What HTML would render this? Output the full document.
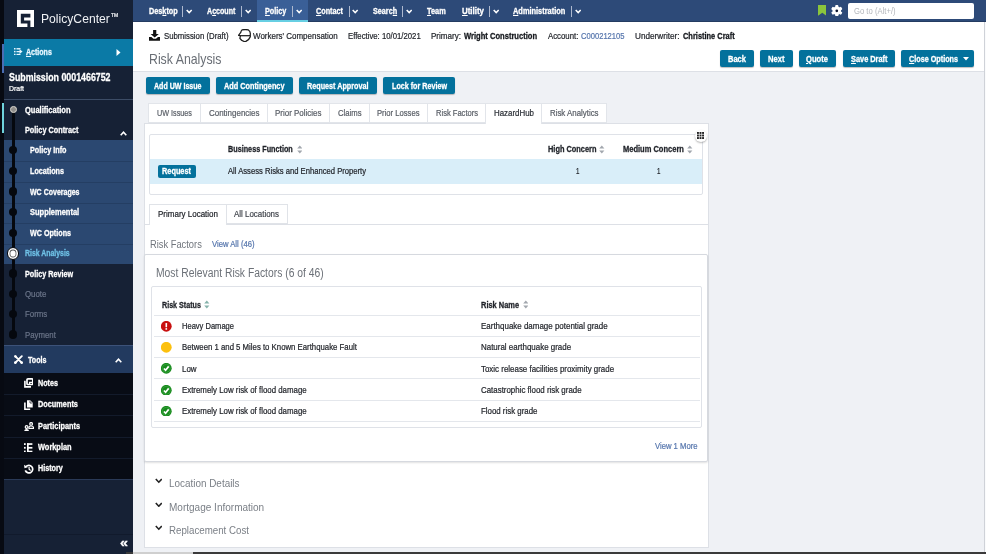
<!DOCTYPE html>
<html>
<head>
<meta charset="utf-8">
<title>PolicyCenter - Risk Analysis</title>
<style>
*{box-sizing:border-box;margin:0;padding:0}
html,body{width:986px;height:554px;overflow:hidden;background:#eff1f5;font-family:"Liberation Sans",sans-serif;}
.t{position:absolute;white-space:nowrap;line-height:1;transform-origin:0 50%;font-family:"Liberation Sans",sans-serif}
.t u{text-decoration:underline;text-underline-offset:1px}
.n{-webkit-text-stroke:0.22px currentColor}
.b{-webkit-text-stroke:0.3px currentColor}
#w{position:absolute;left:0;top:0;width:986px;height:554px;will-change:transform}
</style>
</head>
<body>
<div id="w">
<div style="position:absolute;left:0px;top:0px;width:133px;height:554px;background:#162135;"></div>
<div style="position:absolute;left:0px;top:0px;width:4px;height:554px;background:#070a12;"></div>
<div style="position:absolute;left:1.8px;top:44px;width:2.2px;height:28.5px;background:#4a6db3;"></div>
<div style="position:absolute;left:1.8px;top:103px;width:2.3px;height:30px;background:#6fd3dc;"></div>
<svg style="position:absolute;left:17px;top:10px" width="17" height="17" viewBox="0 0 17 17"><path d="M0 0H17V17H13.4V10.6H7.1V7.5H13.4V3.8H3.8V13.5H10.4V17H0Z" fill="#fff"/></svg>
<div style="position:absolute;left:4px;top:39px;width:129px;height:27px;background:#0b7aa6;"></div>
<svg style="position:absolute;left:14.4px;top:47.5px" width="8.6" height="7.4" viewBox="0 0 9 8" preserveAspectRatio="none"><g fill="#e6f6ff"><rect x="0" y="0" width="1.6" height="1.6"/><rect x="0" y="3.1" width="1.6" height="1.6"/><rect x="0" y="6.2" width="1.6" height="1.6"/><rect x="2.6" y="0.1" width="4.2" height="1.5"/><rect x="2.6" y="6.3" width="4.2" height="1.5"/><path d="M2.6 3.15H5.8V1.4L9 3.9L5.8 6.4V4.65H2.6Z"/></g></svg>
<svg style="position:absolute;left:116px;top:48.5px" width="5" height="7" viewBox="0 0 5 7"><path d="M0.5 0L4.5 3.5L0.5 7Z" fill="#fff"/></svg>
<div style="position:absolute;left:4px;top:99px;width:129px;height:1px;background:#3c4c66;"></div>
<div style="position:absolute;left:4px;top:140px;width:129px;height:124px;background:#2b4871;"></div>
<div style="position:absolute;left:4px;top:161px;width:129px;height:1px;background:#243e63;"></div>
<div style="position:absolute;left:4px;top:182px;width:129px;height:1px;background:#243e63;"></div>
<div style="position:absolute;left:4px;top:202.5px;width:129px;height:1px;background:#243e63;"></div>
<div style="position:absolute;left:4px;top:223px;width:129px;height:1px;background:#243e63;"></div>
<div style="position:absolute;left:4px;top:243.5px;width:129px;height:1px;background:#243e63;"></div>
<div style="position:absolute;left:12px;top:112px;width:2.6px;height:223px;background:#05080e;"></div>
<div style="position:absolute;left:9.2px;top:145.9px;width:8.2px;height:8.2px;border-radius:50%;background:#05080e"></div>
<div style="position:absolute;left:9.2px;top:166.9px;width:8.2px;height:8.2px;border-radius:50%;background:#05080e"></div>
<div style="position:absolute;left:9.2px;top:187.4px;width:8.2px;height:8.2px;border-radius:50%;background:#05080e"></div>
<div style="position:absolute;left:9.2px;top:207.9px;width:8.2px;height:8.2px;border-radius:50%;background:#05080e"></div>
<div style="position:absolute;left:9.2px;top:228.9px;width:8.2px;height:8.2px;border-radius:50%;background:#05080e"></div>
<div style="position:absolute;left:9.2px;top:269.4px;width:8.2px;height:8.2px;border-radius:50%;background:#05080e"></div>
<div style="position:absolute;left:9.2px;top:289.9px;width:8.2px;height:8.2px;border-radius:50%;background:#05080e"></div>
<div style="position:absolute;left:9.2px;top:309.9px;width:8.2px;height:8.2px;border-radius:50%;background:#05080e"></div>
<div style="position:absolute;left:9.2px;top:330.4px;width:8.2px;height:8.2px;border-radius:50%;background:#05080e"></div>
<div style="position:absolute;left:10px;top:106.4px;width:6.8px;height:6.8px;border-radius:50%;background:#8f8d8a;border:1.5px solid #dcd8d0"></div>
<div style="position:absolute;left:6.6px;top:246.9px;width:12.8px;height:12.8px;border-radius:50%;background:#fff;border:1.6px solid #05080e;box-shadow:inset 0 0 0 1.6px #fff, inset 0 0 0 2.4px #555"></div>
<svg style="position:absolute;left:120px;top:131px" width="7" height="5" viewBox="0 0 7 5"><path d="M0.7 4.2L3.5 1.2L6.3 4.2" stroke="#fff" stroke-width="1.6" fill="none"/></svg>
<div style="position:absolute;left:4px;top:345px;width:129px;height:1px;background:#3c5279;"></div>
<div style="position:absolute;left:4px;top:346px;width:129px;height:27px;background:#223a5f;"></div>
<svg style="position:absolute;left:13.8px;top:355.4px" width="9" height="9" viewBox="0 0 9 9"><path d="M1.2 1.2L7.8 7.8M7.8 1.2L1.2 7.8" stroke="#fff" stroke-width="1.9" stroke-linecap="round"/><circle cx="1.4" cy="7.6" r="1.4" fill="#fff"/><circle cx="7.6" cy="7.6" r="1.4" fill="#fff"/><circle cx="1.5" cy="1.5" r="1.2" fill="#fff"/></svg>
<svg style="position:absolute;left:115.3px;top:357.5px" width="7" height="5" viewBox="0 0 7 5"><path d="M0.7 4.2L3.5 1.2L6.3 4.2" stroke="#fff" stroke-width="1.6" fill="none"/></svg>
<div style="position:absolute;left:4px;top:373px;width:129px;height:106px;background:#080c15;"></div>
<div style="position:absolute;left:4px;top:393.5px;width:129px;height:1px;background:#131b2b;"></div>
<div style="position:absolute;left:4px;top:415px;width:129px;height:1px;background:#131b2b;"></div>
<div style="position:absolute;left:4px;top:436.5px;width:129px;height:1px;background:#131b2b;"></div>
<div style="position:absolute;left:4px;top:457.5px;width:129px;height:1px;background:#131b2b;"></div>
<div style="position:absolute;left:4px;top:479px;width:129px;height:1px;background:#2a3a57;"></div>
<svg style="position:absolute;left:23.8px;top:378px" width="9.6" height="9.8" viewBox="0 0 9.6 9.8"><rect x="3" y="0.9" width="5.8" height="5.6" rx="1" fill="none" stroke="#fff" stroke-width="1.7"/><path d="M0.9 2.8V8.9H7" fill="none" stroke="#fff" stroke-width="1.6"/><path d="M5.6 6.6V4.4H8.8" fill="none" stroke="#fff" stroke-width="1.2"/></svg>
<svg style="position:absolute;left:24.2px;top:400px" width="9" height="10" viewBox="0 0 9 10"><path d="M3 0.3H6.2L8.7 2.8V7.4H3Z" fill="#fff"/><path d="M6 0.8V3H8.2" fill="none" stroke="#080c15" stroke-width="0.7"/><path d="M0.9 2.4V9.2H6.2" fill="none" stroke="#fff" stroke-width="1.6"/></svg>
<svg style="position:absolute;left:23.8px;top:421.6px" width="9.8" height="9.8" viewBox="0 0 9.8 9.8"><circle cx="2.6" cy="5" r="1.35" fill="none" stroke="#fff" stroke-width="1.2"/><path d="M0.3 9.6V8.8Q0.3 7.1 2.6 7.1Q4.9 7.1 4.9 8.8V9.6Z" fill="#fff"/><circle cx="7.1" cy="1.9" r="1.35" fill="none" stroke="#fff" stroke-width="1.2"/><path d="M4.9 6.4V5.6Q4.9 4 7.1 4Q9.5 4 9.5 5.6V6.4Z" fill="none" stroke="#fff" stroke-width="1.1"/></svg>
<svg style="position:absolute;left:24.3px;top:442.8px" width="8.6" height="9.6" viewBox="0 0 8.6 9.6"><g fill="#fff"><rect x="0" y="0.2" width="1.7" height="1.8"/><rect x="0" y="3.9" width="1.7" height="1.8"/><rect x="0" y="7.6" width="1.7" height="1.8"/><rect x="3" y="0.2" width="1.7" height="9.2"/><rect x="3" y="0.2" width="5.4" height="1.7"/><rect x="3" y="3.95" width="5.4" height="1.7"/><rect x="3" y="7.7" width="5.4" height="1.7"/></g></svg>
<svg style="position:absolute;left:24.2px;top:463.5px" width="9.8" height="10" viewBox="0 0 9.8 10"><path d="M2 2.6A3.8 3.8 0 1 1 1.3 6.4" fill="none" stroke="#fff" stroke-width="1.7"/><path d="M0 0.8L0.5 4.2L3.8 3.3Z" fill="#fff"/><path d="M5.1 3V5.3L6.6 6.4" fill="none" stroke="#fff" stroke-width="1.2"/></svg>
<div style="position:absolute;left:4px;top:533.5px;width:129px;height:1px;background:#111a2c;"></div>
<div style="position:absolute;left:133px;top:0px;width:853px;height:22px;background:#2d4a78;"></div>
<div style="position:absolute;left:133px;top:21px;width:853px;height:1px;background:#243b61;"></div>
<div style="position:absolute;left:256.5px;top:0px;width:51px;height:22px;background:#3a5f97;"></div>
<div style="position:absolute;left:256.5px;top:20px;width:51px;height:2px;background:#67cfe3;"></div>
<div style="position:absolute;left:182.4px;top:6px;width:1px;height:11px;background:#aeb9cf;"></div>
<svg style="position:absolute;left:186.3px;top:9px" width="6.4" height="5" viewBox="0 0 6.4 5"><path d="M0.7 0.9L3.2 3.6L5.7 0.9" stroke="#fff" stroke-width="1.5" fill="none"/></svg>
<div style="position:absolute;left:241.3px;top:6px;width:1px;height:11px;background:#aeb9cf;"></div>
<svg style="position:absolute;left:244.8px;top:9px" width="6.4" height="5" viewBox="0 0 6.4 5"><path d="M0.7 0.9L3.2 3.6L5.7 0.9" stroke="#fff" stroke-width="1.5" fill="none"/></svg>
<div style="position:absolute;left:292.0px;top:6px;width:1px;height:11px;background:#aeb9cf;"></div>
<svg style="position:absolute;left:295.6px;top:9px" width="6.4" height="5" viewBox="0 0 6.4 5"><path d="M0.7 0.9L3.2 3.6L5.7 0.9" stroke="#fff" stroke-width="1.5" fill="none"/></svg>
<div style="position:absolute;left:348.5px;top:6px;width:1px;height:11px;background:#aeb9cf;"></div>
<svg style="position:absolute;left:352.3px;top:9px" width="6.4" height="5" viewBox="0 0 6.4 5"><path d="M0.7 0.9L3.2 3.6L5.7 0.9" stroke="#fff" stroke-width="1.5" fill="none"/></svg>
<div style="position:absolute;left:402.1px;top:6px;width:1px;height:11px;background:#aeb9cf;"></div>
<svg style="position:absolute;left:406.0px;top:9px" width="6.4" height="5" viewBox="0 0 6.4 5"><path d="M0.7 0.9L3.2 3.6L5.7 0.9" stroke="#fff" stroke-width="1.5" fill="none"/></svg>
<div style="position:absolute;left:489.2px;top:6px;width:1px;height:11px;background:#aeb9cf;"></div>
<svg style="position:absolute;left:493.1px;top:9px" width="6.4" height="5" viewBox="0 0 6.4 5"><path d="M0.7 0.9L3.2 3.6L5.7 0.9" stroke="#fff" stroke-width="1.5" fill="none"/></svg>
<div style="position:absolute;left:570.8px;top:6px;width:1px;height:11px;background:#aeb9cf;"></div>
<svg style="position:absolute;left:574.6999999999999px;top:9px" width="6.4" height="5" viewBox="0 0 6.4 5"><path d="M0.7 0.9L3.2 3.6L5.7 0.9" stroke="#fff" stroke-width="1.5" fill="none"/></svg>
<svg style="position:absolute;left:817.6px;top:5.2px" width="8.6" height="10.8" viewBox="0 0 8.6 10.8"><path d="M0 0H8.6V10.8L4.3 7.8L0 10.8Z" fill="#8bc53c"/></svg>
<svg style="position:absolute;left:831.4px;top:4.9px" width="11.6" height="11.6" viewBox="-5.8 -5.8 11.6 11.6"><g fill="#fff"><circle r="4.3"/><g id="t"><rect x="-1.55" y="-5.7" width="3.1" height="11.4" rx="0.8"/></g><use href="#t" transform="rotate(60)"/><use href="#t" transform="rotate(120)"/></g><circle r="1.35" fill="#0d1530"/></svg>
<div style="position:absolute;left:848px;top:3px;width:126px;height:16.3px;background:#fff;border-radius:2px"></div>
<div style="position:absolute;left:133px;top:22px;width:853px;height:24px;background:#fff;"></div>
<div style="position:absolute;left:133px;top:45.5px;width:853px;height:1px;background:#dde0e6;"></div>
<svg style="position:absolute;left:148.5px;top:30.2px" width="11.4" height="10.7" viewBox="0 0 11.4 10.7"><path d="M4.1 0H7.3V3.9H9.8L5.7 7.6L1.6 3.9H4.1Z" fill="#111"/><path d="M0 6.9H2.4L4.4 8.7H7L9 6.9H11.4V10.7H0Z" fill="#111"/></svg>
<svg style="position:absolute;left:238.2px;top:28.7px" width="13" height="13.4" viewBox="0 0 13 13.4"><g fill="none" stroke="#1c1c1c" stroke-width="1.25" stroke-linejoin="round"><path d="M4 0.9Q7.2 0.2 10.4 0.9Q12.3 2.2 12.3 4.2V7.8Q11.2 11.2 7.1 12.8Q3.4 11.8 1.9 9.4L2.4 6.6L0.5 6.3L2.8 3.4Q3 1.6 4 0.9Z"/><path d="M2.4 6.7H12.2"/></g></svg>
<div style="position:absolute;left:133px;top:46px;width:853px;height:25px;background:#fff;"></div>
<div style="position:absolute;left:133px;top:70.5px;width:853px;height:1px;background:#dde0e6;"></div>
<div style="position:absolute;left:720.4px;top:50.4px;width:33.80000000000007px;height:16.199999999999996px;background:#03719c;border-radius:2px;box-shadow:0 1px 1px rgba(0,0,0,.25)"></div>
<div style="position:absolute;left:760.4px;top:50.4px;width:32.200000000000045px;height:16.199999999999996px;background:#03719c;border-radius:2px;box-shadow:0 1px 1px rgba(0,0,0,.25)"></div>
<div style="position:absolute;left:798.5px;top:50.4px;width:37.5px;height:16.199999999999996px;background:#03719c;border-radius:2px;box-shadow:0 1px 1px rgba(0,0,0,.25)"></div>
<div style="position:absolute;left:842.7px;top:50.4px;width:52.09999999999991px;height:16.199999999999996px;background:#03719c;border-radius:2px;box-shadow:0 1px 1px rgba(0,0,0,.25)"></div>
<div style="position:absolute;left:901px;top:50.4px;width:73px;height:16.199999999999996px;background:#03719c;border-radius:2px;box-shadow:0 1px 1px rgba(0,0,0,.25)"></div>
<svg style="position:absolute;left:963px;top:57px" width="6" height="4" viewBox="0 0 6 4"><path d="M0 0H6L3 3.6Z" fill="#fff"/></svg>
<div style="position:absolute;left:146px;top:77.4px;width:64.30000000000001px;height:16.799999999999997px;background:#03719c;border-radius:2px;box-shadow:0 1px 1px rgba(0,0,0,.25)"></div>
<div style="position:absolute;left:216.3px;top:77.4px;width:76.69999999999999px;height:16.799999999999997px;background:#03719c;border-radius:2px;box-shadow:0 1px 1px rgba(0,0,0,.25)"></div>
<div style="position:absolute;left:299px;top:77.4px;width:78px;height:16.799999999999997px;background:#03719c;border-radius:2px;box-shadow:0 1px 1px rgba(0,0,0,.25)"></div>
<div style="position:absolute;left:383.3px;top:77.4px;width:72.0px;height:16.799999999999997px;background:#03719c;border-radius:2px;box-shadow:0 1px 1px rgba(0,0,0,.25)"></div>
<div style="position:absolute;left:143.7px;top:123px;width:565px;height:431px;background:#fff;border:1px solid #dde0e6;border-bottom:none"></div>
<div style="position:absolute;left:147.8px;top:102.7px;width:53.599999999999994px;height:20.3px;background:#fff;border:1px solid #e2e5ea;"></div>
<div style="position:absolute;left:200.4px;top:102.7px;width:67.19999999999999px;height:20.3px;background:#fff;border:1px solid #e2e5ea;"></div>
<div style="position:absolute;left:266.59999999999997px;top:102.7px;width:63.60000000000002px;height:20.3px;background:#fff;border:1px solid #e2e5ea;"></div>
<div style="position:absolute;left:329.2px;top:102.7px;width:40.39999999999998px;height:20.3px;background:#fff;border:1px solid #e2e5ea;"></div>
<div style="position:absolute;left:368.59999999999997px;top:102.7px;width:59.30000000000001px;height:20.3px;background:#fff;border:1px solid #e2e5ea;"></div>
<div style="position:absolute;left:426.9px;top:102.7px;width:59.5px;height:20.3px;background:#fff;border:1px solid #e2e5ea;"></div>
<div style="position:absolute;left:485.4px;top:102.7px;width:56.5px;height:21px;background:#fff;border:1px solid #e2e5ea;border-bottom:none;"></div>
<div style="position:absolute;left:540.9px;top:102.7px;width:65.89999999999998px;height:20.3px;background:#fff;border:1px solid #e2e5ea;"></div>
<div style="position:absolute;left:149px;top:134px;width:554px;height:60.6px;background:#fff;border:1px solid #dfe2e8;border-radius:2px"></div>
<div style="position:absolute;left:150px;top:159.3px;width:552px;height:24.3px;background:#d9eef9;"></div>
<svg style="position:absolute;left:296.5px;top:144.7px" width="5.6" height="9" viewBox="0 0 5.6 9"><path d="M0.2 3.4L2.8 0.4L5.4 3.4Z M0.2 5.6L2.8 8.6L5.4 5.6Z" fill="#a2a7ae"/></svg>
<svg style="position:absolute;left:599.4000000000001px;top:144.7px" width="5.6" height="9" viewBox="0 0 5.6 9"><path d="M0.2 3.4L2.8 0.4L5.4 3.4Z M0.2 5.6L2.8 8.6L5.4 5.6Z" fill="#a2a7ae"/></svg>
<svg style="position:absolute;left:687.0px;top:144.7px" width="5.6" height="9" viewBox="0 0 5.6 9"><path d="M0.2 3.4L2.8 0.4L5.4 3.4Z M0.2 5.6L2.8 8.6L5.4 5.6Z" fill="#a2a7ae"/></svg>
<div style="position:absolute;left:157.6px;top:164.5px;width:38.2px;height:13.8px;background:#03719c;border-radius:2px"></div>
<div style="position:absolute;left:694.5px;top:129.5px;width:12px;height:12px;border-radius:50%;background:#fff;box-shadow:0 1px 2px rgba(0,0,0,.3)"></div>
<svg style="position:absolute;left:697px;top:132px" width="7" height="7" viewBox="0 0 7 7"><g fill="#222"><rect x="0" y="0" width="1.9" height="1.9"/><rect x="2.55" y="0" width="1.9" height="1.9"/><rect x="5.1" y="0" width="1.9" height="1.9"/><rect x="0" y="2.55" width="1.9" height="1.9"/><rect x="2.55" y="2.55" width="1.9" height="1.9"/><rect x="5.1" y="2.55" width="1.9" height="1.9"/><rect x="0" y="5.1" width="1.9" height="1.9"/><rect x="2.55" y="5.1" width="1.9" height="1.9"/><rect x="5.1" y="5.1" width="1.9" height="1.9"/></g></svg>
<div style="position:absolute;left:144.7px;top:224px;width:563px;height:1px;background:#dde0e6;"></div>
<div style="position:absolute;left:149.1px;top:203.5px;width:78px;height:21.5px;background:#fff;border:1px solid #e0e3e8;border-bottom:none"></div>
<div style="position:absolute;left:226.1px;top:203.5px;width:62px;height:20.7px;background:#fff;border:1px solid #e0e3e8"></div>
<div style="position:absolute;left:144.2px;top:254.3px;width:564.3px;height:208px;background:#fff;border:1px solid #d6d9df;border-radius:2px;box-shadow:0 1px 2px rgba(0,0,0,.12)"></div>
<div style="position:absolute;left:150.6px;top:286.4px;width:551.6px;height:141.6px;background:#fff;border:1px solid #dfe2e8;border-radius:2px"></div>
<svg style="position:absolute;left:204.2px;top:300.3px" width="5.6" height="9" viewBox="0 0 5.6 9"><path d="M0.2 3.4L2.8 0.4L5.4 3.4Z M0.2 5.6L2.8 8.6L5.4 5.6Z" fill="#86b3ab"/></svg>
<svg style="position:absolute;left:522.7px;top:300.3px" width="5.6" height="9" viewBox="0 0 5.6 9"><path d="M0.2 3.4L2.8 0.4L5.4 3.4Z M0.2 5.6L2.8 8.6L5.4 5.6Z" fill="#a2a7ae"/></svg>
<div style="position:absolute;left:153.7px;top:314.5px;width:546px;height:1px;background:#e4e7ec;"></div>
<div style="position:absolute;left:153.7px;top:335.8px;width:546px;height:1px;background:#e4e7ec;"></div>
<div style="position:absolute;left:153.7px;top:357.1px;width:546px;height:1px;background:#e4e7ec;"></div>
<div style="position:absolute;left:153.7px;top:378.4px;width:546px;height:1px;background:#e4e7ec;"></div>
<div style="position:absolute;left:153.7px;top:399.7px;width:546px;height:1px;background:#e4e7ec;"></div>
<div style="position:absolute;left:153.7px;top:421.0px;width:546px;height:1px;background:#e4e7ec;"></div>
<svg style="position:absolute;left:161.2px;top:321.0px" width="10.6" height="10.6" viewBox="0 0 10.6 10.6"><circle cx="5.3" cy="5.3" r="5.4" fill="#c8100f"/><rect x="4.5" y="2" width="1.6" height="4.3" rx="0.6" fill="#fff"/><circle cx="5.3" cy="7.9" r="0.95" fill="#fff"/></svg>
<svg style="position:absolute;left:161.2px;top:342.09999999999997px" width="10.6" height="10.6" viewBox="0 0 10.6 10.6"><circle cx="5.3" cy="5.3" r="5.4" fill="#fcc00e"/></svg>
<svg style="position:absolute;left:161.2px;top:363.3px" width="10.6" height="10.6" viewBox="0 0 10.6 10.6"><circle cx="5.3" cy="5.3" r="5.4" fill="#168a1b"/><circle cx="5.3" cy="5.3" r="4" fill="none" stroke="#4fb055" stroke-width="0.5"/><path d="M2.9 5.5L4.6 7.2L7.7 3.4" stroke="#fff" stroke-width="1.7" fill="none"/></svg>
<svg style="position:absolute;left:161.2px;top:384.5px" width="10.6" height="10.6" viewBox="0 0 10.6 10.6"><circle cx="5.3" cy="5.3" r="5.4" fill="#168a1b"/><circle cx="5.3" cy="5.3" r="4" fill="none" stroke="#4fb055" stroke-width="0.5"/><path d="M2.9 5.5L4.6 7.2L7.7 3.4" stroke="#fff" stroke-width="1.7" fill="none"/></svg>
<svg style="position:absolute;left:161.2px;top:405.8px" width="10.6" height="10.6" viewBox="0 0 10.6 10.6"><circle cx="5.3" cy="5.3" r="5.4" fill="#168a1b"/><circle cx="5.3" cy="5.3" r="4" fill="none" stroke="#4fb055" stroke-width="0.5"/><path d="M2.9 5.5L4.6 7.2L7.7 3.4" stroke="#fff" stroke-width="1.7" fill="none"/></svg>
<svg style="position:absolute;left:154.6px;top:478.4px" width="7.6" height="5.6" viewBox="0 0 7.6 5.6"><path d="M0.8 1L3.8 4.2L6.8 1" stroke="#222" stroke-width="1.6" fill="none"/></svg>
<svg style="position:absolute;left:154.6px;top:501.9px" width="7.6" height="5.6" viewBox="0 0 7.6 5.6"><path d="M0.8 1L3.8 4.2L6.8 1" stroke="#222" stroke-width="1.6" fill="none"/></svg>
<svg style="position:absolute;left:154.6px;top:525.4px" width="7.6" height="5.6" viewBox="0 0 7.6 5.6"><path d="M0.8 1L3.8 4.2L6.8 1" stroke="#222" stroke-width="1.6" fill="none"/></svg>
<div style="position:absolute;left:143.7px;top:546.7px;width:565px;height:1px;background:#dde0e6;"></div>
<div style="position:absolute;left:143.7px;top:547.7px;width:565px;height:7px;background:#eff1f5;"></div>
<div style="position:absolute;left:125.5px;top:552px;width:860.5px;height:2px;background:#3a3a3a;"></div>
<div style="position:absolute;left:133px;top:552px;width:60px;height:2px;background:#cfcfcf;"></div>
<div style="position:absolute;left:984px;top:22px;width:1px;height:530px;background:#cfd2d8;"></div>
<div style="position:absolute;left:985px;top:22px;width:1px;height:530px;background:#fafbfc;"></div>
<span class="t" style="left:40.9px;top:12.62px;font-size:12.32px;font-weight:normal;color:#f0f2f5;transform:scaleX(0.9855);">PolicyCenter</span>
<span class="t n" style="left:110.5px;top:14.26px;font-size:4.62px;font-weight:normal;color:#e8eaee;transform:scaleX(1.0817);">TM</span>
<span class="t b" style="left:26.0px;top:47.84px;font-size:8.47px;font-weight:bold;color:#e9f7ff;transform:scaleX(0.8302);"><u>A</u>ctions</span>
<span class="t b" style="left:9.2px;top:71.93px;font-size:11.22px;font-weight:bold;color:#fff;transform:scaleX(0.7863);">Submission 0001466752</span>
<span class="t n" style="left:9.2px;top:85.17px;font-size:7.7px;font-weight:normal;color:#fff;transform:scaleX(0.8997);">Draft</span>
<span class="t b" style="left:25.2px;top:105.56px;font-size:8.8px;font-weight:bold;color:#fff;transform:scaleX(0.8540);">Qualification</span>
<span class="t b" style="left:25.2px;top:125.56px;font-size:8.8px;font-weight:bold;color:#fff;transform:scaleX(0.8291);">Policy Contract</span>
<span class="t b" style="left:29.8px;top:146.06px;font-size:8.8px;font-weight:bold;color:#fff;transform:scaleX(0.8205);">Policy Info</span>
<span class="t b" style="left:29.8px;top:167.06px;font-size:8.8px;font-weight:bold;color:#fff;transform:scaleX(0.8184);">Locations</span>
<span class="t b" style="left:29.5px;top:187.56px;font-size:8.8px;font-weight:bold;color:#fff;transform:scaleX(0.7972);">WC Coverages</span>
<span class="t b" style="left:29.8px;top:208.26px;font-size:8.8px;font-weight:bold;color:#fff;transform:scaleX(0.8529);">Supplemental</span>
<span class="t b" style="left:29.5px;top:229.36px;font-size:8.8px;font-weight:bold;color:#fff;transform:scaleX(0.8144);">WC Options</span>
<span class="t b" style="left:25.2px;top:249.36px;font-size:8.8px;font-weight:bold;color:#6fc1e6;transform:scaleX(0.7857);">Risk Analysis</span>
<span class="t b" style="left:25.2px;top:269.76px;font-size:8.8px;font-weight:bold;color:#fff;transform:scaleX(0.8179);">Policy Review</span>
<span class="t n" style="left:25.2px;top:290.06px;font-size:8.8px;font-weight:normal;color:#6a7488;transform:scaleX(0.8928);">Quote</span>
<span class="t n" style="left:25.2px;top:310.06px;font-size:8.8px;font-weight:normal;color:#6a7488;transform:scaleX(0.8908);">Forms</span>
<span class="t n" style="left:25.2px;top:330.66px;font-size:8.8px;font-weight:normal;color:#6a7488;transform:scaleX(0.8871);">Payment</span>
<span class="t b" style="left:27.8px;top:355.56px;font-size:8.8px;font-weight:bold;color:#fff;transform:scaleX(0.8066);">Tools</span>
<span class="t b" style="left:37.9px;top:379.06px;font-size:8.8px;font-weight:bold;color:#fff;transform:scaleX(0.8179);">Notes</span>
<span class="t b" style="left:37.9px;top:400.46px;font-size:8.8px;font-weight:bold;color:#fff;transform:scaleX(0.8329);">Documents</span>
<span class="t b" style="left:37.9px;top:422.06px;font-size:8.8px;font-weight:bold;color:#fff;transform:scaleX(0.8340);">Participants</span>
<span class="t b" style="left:37.9px;top:443.06px;font-size:8.8px;font-weight:bold;color:#fff;transform:scaleX(0.8416);">Workplan</span>
<span class="t b" style="left:37.9px;top:464.46px;font-size:8.8px;font-weight:bold;color:#fff;transform:scaleX(0.8181);">History</span>
<span class="t b" style="left:119.6px;top:536.54px;font-size:12.1px;font-weight:bold;color:#fff;transform:scaleX(1.1879);">«</span>
<span class="t b" style="left:148.8px;top:7.26px;font-size:8.8px;font-weight:bold;color:#fff;transform:scaleX(0.8263);">Des<u>k</u>top</span>
<span class="t b" style="left:206.8px;top:7.26px;font-size:8.8px;font-weight:bold;color:#fff;transform:scaleX(0.8064);">A<u>c</u>count</span>
<span class="t b" style="left:265.0px;top:7.26px;font-size:8.8px;font-weight:bold;color:#fff;transform:scaleX(0.8256);"><u>P</u>olicy</span>
<span class="t b" style="left:316.0px;top:7.26px;font-size:8.8px;font-weight:bold;color:#fff;transform:scaleX(0.8240);"><u>C</u>ontact</span>
<span class="t b" style="left:372.9px;top:7.26px;font-size:8.8px;font-weight:bold;color:#fff;transform:scaleX(0.8213);">Searc<u>h</u></span>
<span class="t b" style="left:427.0px;top:7.26px;font-size:8.8px;font-weight:bold;color:#fff;transform:scaleX(0.8369);"><u>T</u>eam</span>
<span class="t b" style="left:462.2px;top:7.26px;font-size:8.8px;font-weight:bold;color:#fff;transform:scaleX(0.8956);"><u>U</u>tility</span>
<span class="t b" style="left:513.4px;top:7.26px;font-size:8.8px;font-weight:bold;color:#fff;transform:scaleX(0.8425);"><u>A</u>dministration</span>
<span class="t" style="left:853.8px;top:7.36px;font-size:8.8px;font-weight:normal;color:#b3b6bb;transform:scaleX(0.8726);">Go to (Alt+/)</span>
<span class="t n" style="left:163.7px;top:31.76px;font-size:8.8px;font-weight:normal;color:#1f2228;transform:scaleX(0.8855);">Submission (Draft)</span>
<span class="t n" style="left:253.0px;top:31.76px;font-size:8.8px;font-weight:normal;color:#1f2228;transform:scaleX(0.9065);">Workers' Compensation</span>
<span class="t n" style="left:347.8px;top:31.76px;font-size:8.8px;font-weight:normal;color:#1f2228;transform:scaleX(0.8812);">Effective: 10/01/2021</span>
<span class="t n" style="left:431.4px;top:31.76px;font-size:8.8px;font-weight:normal;color:#1f2228;transform:scaleX(0.9160);">Primary:</span>
<span class="t b" style="left:464.1px;top:31.76px;font-size:8.8px;font-weight:bold;color:#15181d;transform:scaleX(0.8613);">Wright Construction</span>
<span class="t n" style="left:547.6px;top:31.76px;font-size:8.8px;font-weight:normal;color:#1f2228;transform:scaleX(0.8880);">Account:</span>
<span class="t n" style="left:581.0px;top:31.76px;font-size:8.8px;font-weight:normal;color:#5676ad;transform:scaleX(0.8633);">C000212105</span>
<span class="t n" style="left:634.8px;top:31.76px;font-size:8.8px;font-weight:normal;color:#1f2228;transform:scaleX(0.9289);">Underwriter:</span>
<span class="t b" style="left:682.8px;top:31.76px;font-size:8.8px;font-weight:bold;color:#15181d;transform:scaleX(0.8460);">Christine Craft</span>
<span class="t" style="left:149.0px;top:52.33px;font-size:14.3px;font-weight:normal;color:#696e75;transform:scaleX(0.8609);">Risk Analysis</span>
<span class="t b" style="left:728.3px;top:54.66px;font-size:8.8px;font-weight:bold;color:#fff;transform:scaleX(0.8559);">Back</span>
<span class="t b" style="left:768.2px;top:54.66px;font-size:8.8px;font-weight:bold;color:#fff;transform:scaleX(0.8649);">Next</span>
<span class="t b" style="left:806.2px;top:54.66px;font-size:8.8px;font-weight:bold;color:#fff;transform:scaleX(0.8654);"><u>Q</u>uote</span>
<span class="t b" style="left:850.5px;top:54.66px;font-size:8.8px;font-weight:bold;color:#fff;transform:scaleX(0.8385);"><u>S</u>ave Draft</span>
<span class="t b" style="left:908.5px;top:54.66px;font-size:8.8px;font-weight:bold;color:#fff;transform:scaleX(0.8216);"><u>C</u>lose Options</span>
<span class="t b" style="left:154.4px;top:81.86px;font-size:8.8px;font-weight:bold;color:#fff;transform:scaleX(0.8032);">Add UW Issue</span>
<span class="t b" style="left:224.4px;top:81.86px;font-size:8.8px;font-weight:bold;color:#fff;transform:scaleX(0.8307);">Add Contingency</span>
<span class="t b" style="left:307.2px;top:81.86px;font-size:8.8px;font-weight:bold;color:#fff;transform:scaleX(0.8205);">Request Approval</span>
<span class="t b" style="left:391.8px;top:81.86px;font-size:8.8px;font-weight:bold;color:#fff;transform:scaleX(0.8152);">Lock for Review</span>
<span class="t n" style="left:157.2px;top:108.96px;font-size:8.8px;font-weight:normal;color:#5a5f67;transform:scaleX(0.8229);">UW Issues</span>
<span class="t n" style="left:208.8px;top:108.96px;font-size:8.8px;font-weight:normal;color:#5a5f67;transform:scaleX(0.9058);">Contingencies</span>
<span class="t n" style="left:275.2px;top:108.96px;font-size:8.8px;font-weight:normal;color:#5a5f67;transform:scaleX(0.9057);">Prior Policies</span>
<span class="t n" style="left:337.8px;top:108.96px;font-size:8.8px;font-weight:normal;color:#5a5f67;transform:scaleX(0.8739);">Claims</span>
<span class="t n" style="left:377.1px;top:108.96px;font-size:8.8px;font-weight:normal;color:#5a5f67;transform:scaleX(0.8693);">Prior Losses</span>
<span class="t n" style="left:435.8px;top:108.96px;font-size:8.8px;font-weight:normal;color:#5a5f67;transform:scaleX(0.8591);">Risk Factors</span>
<span class="t n" style="left:493.8px;top:108.96px;font-size:8.8px;font-weight:normal;color:#2b2f36;transform:scaleX(0.8989);">HazardHub</span>
<span class="t n" style="left:549.7px;top:108.96px;font-size:8.8px;font-weight:normal;color:#5a5f67;transform:scaleX(0.8938);">Risk Analytics</span>
<span class="t b" style="left:228.2px;top:144.76px;font-size:8.8px;font-weight:bold;color:#1f2228;transform:scaleX(0.8233);">Business Function</span>
<span class="t b" style="left:547.5px;top:144.76px;font-size:8.8px;font-weight:bold;color:#1f2228;transform:scaleX(0.8410);">High Concern</span>
<span class="t b" style="left:622.7px;top:144.76px;font-size:8.8px;font-weight:bold;color:#1f2228;transform:scaleX(0.8534);">Medium Concern</span>
<span class="t b" style="left:162.3px;top:167.36px;font-size:8.8px;font-weight:bold;color:#fff;transform:scaleX(0.8353);">Request</span>
<span class="t n" style="left:228.2px;top:167.26px;font-size:8.8px;font-weight:normal;color:#1f2228;transform:scaleX(0.8684);">All Assess Risks and Enhanced Property</span>
<span class="t n" style="left:575.8px;top:167.26px;font-size:8.8px;font-weight:normal;color:#1f2228;transform:scaleX(0.7000);">1</span>
<span class="t n" style="left:657.4px;top:167.26px;font-size:8.8px;font-weight:normal;color:#1f2228;transform:scaleX(0.7000);">1</span>
<span class="t n" style="left:157.6px;top:209.96px;font-size:8.8px;font-weight:normal;color:#1f2228;transform:scaleX(0.9089);">Primary Location</span>
<span class="t n" style="left:233.7px;top:209.96px;font-size:8.8px;font-weight:normal;color:#44484f;transform:scaleX(0.9020);">All Locations</span>
<span class="t" style="left:150.0px;top:238.87px;font-size:10.78px;font-weight:normal;color:#70757c;transform:scaleX(0.8658);">Risk Factors</span>
<span class="t n" style="left:212.4px;top:239.76px;font-size:8.8px;font-weight:normal;color:#5676ad;transform:scaleX(0.8741);">View All (46)</span>
<span class="t" style="left:155.8px;top:267.14px;font-size:12.65px;font-weight:normal;color:#6c7178;transform:scaleX(0.8175);">Most Relevant Risk Factors (6 of 46)</span>
<span class="t b" style="left:161.9px;top:300.76px;font-size:8.8px;font-weight:bold;color:#1f2228;transform:scaleX(0.8117);">Risk Status</span>
<span class="t b" style="left:480.9px;top:300.76px;font-size:8.8px;font-weight:bold;color:#1f2228;transform:scaleX(0.8467);">Risk Name</span>
<span class="t n" style="left:181.7px;top:322.36px;font-size:8.8px;font-weight:normal;color:#1f2228;transform:scaleX(0.8575);">Heavy Damage</span>
<span class="t n" style="left:480.9px;top:322.36px;font-size:8.8px;font-weight:normal;color:#1f2228;transform:scaleX(0.9051);">Earthquake damage potential grade</span>
<span class="t n" style="left:181.7px;top:343.46px;font-size:8.8px;font-weight:normal;color:#1f2228;transform:scaleX(0.8853);">Between 1 and 5 Miles to Known Earthquake Fault</span>
<span class="t n" style="left:480.9px;top:343.46px;font-size:8.8px;font-weight:normal;color:#1f2228;transform:scaleX(0.9031);">Natural earthquake grade</span>
<span class="t n" style="left:181.7px;top:364.66px;font-size:8.8px;font-weight:normal;color:#1f2228;transform:scaleX(0.8984);">Low</span>
<span class="t n" style="left:480.9px;top:364.66px;font-size:8.8px;font-weight:normal;color:#1f2228;transform:scaleX(0.9014);">Toxic release facilities proximity grade</span>
<span class="t n" style="left:181.7px;top:385.86px;font-size:8.8px;font-weight:normal;color:#1f2228;transform:scaleX(0.8948);">Extremely Low risk of flood damage</span>
<span class="t n" style="left:480.9px;top:385.86px;font-size:8.8px;font-weight:normal;color:#1f2228;transform:scaleX(0.8983);">Catastrophic flood risk grade</span>
<span class="t n" style="left:181.7px;top:407.16px;font-size:8.8px;font-weight:normal;color:#1f2228;transform:scaleX(0.8948);">Extremely Low risk of flood damage</span>
<span class="t n" style="left:480.9px;top:407.16px;font-size:8.8px;font-weight:normal;color:#1f2228;transform:scaleX(0.8941);">Flood risk grade</span>
<span class="t n" style="left:654.5px;top:441.86px;font-size:8.8px;font-weight:normal;color:#5676ad;transform:scaleX(0.8721);">View 1 More</span>
<span class="t" style="left:168.5px;top:478.27px;font-size:10.78px;font-weight:normal;color:#7a7f86;transform:scaleX(0.9203);">Location Details</span>
<span class="t" style="left:168.5px;top:501.77px;font-size:10.78px;font-weight:normal;color:#7a7f86;transform:scaleX(0.9303);">Mortgage Information</span>
<span class="t" style="left:168.5px;top:525.27px;font-size:10.78px;font-weight:normal;color:#7a7f86;transform:scaleX(0.9033);">Replacement Cost</span>
</div>
</body>
</html>
